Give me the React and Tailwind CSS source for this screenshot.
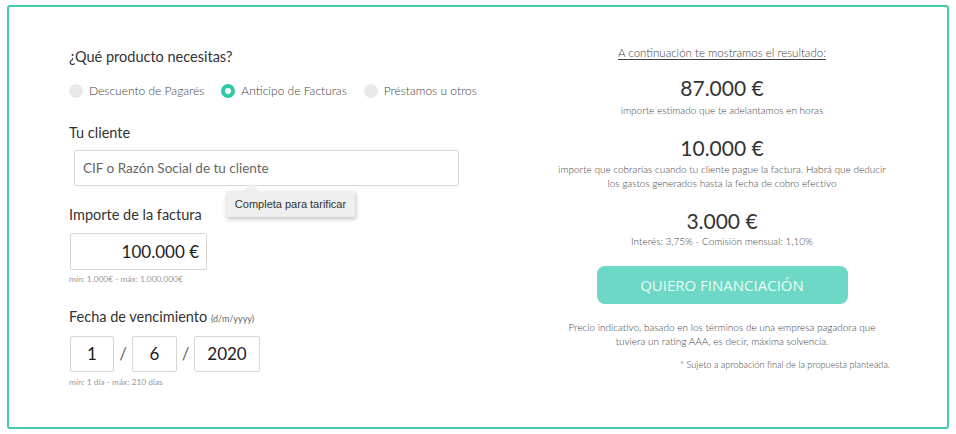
import { useState } from 'react';

const font = { fontFamily: 'Lato, "Open Sans", sans-serif' };

function Radio({ label, active, onClick }) {
  return (
    <button type="button" onClick={onClick} className="shrink-0 whitespace-nowrap flex items-center gap-[6px] mr-[17px]">
      {active ? (
        <span className="w-[14px] h-[14px] rounded-full border-[4px] border-[#2ec9a9] bg-white" />
      ) : (
        <span className="w-[14px] h-[14px] rounded-full bg-[#e9e9e9]" />
      )}
      <span className="text-[12px] text-[#444] font-light">{label}</span>
    </button>
  );
}

export default function App() {
  const [product, setProduct] = useState('facturas');

  return (
    <div className="w-[956px] h-[434px] bg-white pl-[7px] pt-[5px]" style={font}>
      <div className="w-[942px] h-[424px] border-2 border-[#43c9ae] rounded-[3px] flex">
        {/* formulario */}
        <div className="w-[500px] shrink-0 pl-[60px] pt-[40px] text-[#333]">
          <div className="text-[14.5px] leading-[20px]">¿Qué producto necesitas?</div>
          <div className="mt-[14px] h-[20px] flex items-center">
            <Radio label="Descuento de Pagarés" active={product === 'pagares'} onClick={() => setProduct('pagares')} />
            <Radio label="Anticipo de Facturas" active={product === 'facturas'} onClick={() => setProduct('facturas')} />
            <Radio label="Préstamos u otros" active={product === 'prestamos'} onClick={() => setProduct('prestamos')} />
          </div>

          <div className="mt-[22px] text-[14.5px] leading-[20px]">Tu cliente</div>
          <div className="relative mt-[7px] ml-[5px] w-[385px]">
            <input
              type="text"
              placeholder="CIF o Razón Social de tu cliente"
              className="w-full h-[36px] border border-[#d6d6d6] rounded-[2px] px-[8px] text-[13.5px] placeholder:text-[#666] outline-none"
            />
            <div className="absolute left-[152px] top-[41px] z-10">
              <div className="absolute left-[17px] -top-[8px] w-0 h-0 border-l-[8px] border-r-[8px] border-b-[8px] border-l-transparent border-r-transparent border-b-[#efefef]" />
              <div
                className="w-[129px] h-[26px] bg-[#efefef] shadow-[1px_2px_4px_rgba(0,0,0,0.25)] rounded-[2px] flex items-center justify-center text-[11px] text-[#333]"
                style={{ fontFamily: '"Liberation Sans", Arial, sans-serif' }}
              >
                Completa para tarificar
              </div>
            </div>
          </div>

          <div className="mt-[19px] text-[14.5px] leading-[20px]">Importe de la factura</div>
          <div className="mt-[8px] ml-[1px] w-[137px] h-[37px] border border-[#d6d6d6] rounded-[2px] flex items-center justify-end pr-[7px] text-[17px] text-[#222]">
            100.000 €
          </div>
          <div className="mt-[4px] text-[8.4px] leading-[10px] text-[#999]">mín: 1.000€ - máx: 1.000.000€</div>

          <div className="mt-[23px] text-[14.5px] leading-[20px]">
            Fecha de vencimiento <span className="text-[9px] text-[#666]">(d/m/yyyy)</span>
          </div>
          <div className="mt-[7px] ml-[1px] flex items-center text-[17px] text-[#222]">
            <div className="w-[44px] h-[36px] border border-[#d6d6d6] rounded-[2px] flex items-center justify-center">1</div>
            <span className="w-[18px] text-center text-[#666]">/</span>
            <div className="w-[45px] h-[36px] border border-[#d6d6d6] rounded-[2px] flex items-center justify-center">6</div>
            <span className="w-[17px] text-center text-[#666]">/</span>
            <div className="w-[66px] h-[36px] border border-[#d6d6d6] rounded-[2px] flex items-center justify-center">2020</div>
          </div>
          <div className="mt-[5px] text-[8.4px] leading-[10px] text-[#999]">mín: 1 día - máx: 210 días</div>
        </div>

        {/* resultado */}
        <div className="w-[380px] shrink-0 ml-[23px] pt-[39px] flex flex-col items-center text-center text-[#444] font-light">
          <div className="text-[11.5px] leading-[14px] underline underline-offset-2">A continuación te mostramos el resultado:</div>

          <div className="mt-[14px] text-[21px] leading-[28px] text-[#333] font-normal">87.000 €</div>
          <div className="mt-[2px] text-[10px] leading-[13px]">importe estimado que te adelantamos en horas</div>

          <div className="mt-[17px] text-[21px] leading-[28px] text-[#333] font-normal">10.000 €</div>
          <div className="text-[10px] leading-[14px] whitespace-nowrap">
            importe que cobrarías cuando tu cliente pague la factura. Habrá que deducir
            <br />
            los gastos generados hasta la fecha de cobro efectivo
          </div>

          <div className="mt-[17px] text-[21px] leading-[28px] text-[#333] font-normal">3.000 €</div>
          <div className="text-[10px] leading-[13px]">Interés: 3,75% - Comisión mensual: 1,10%</div>

          <button
            type="button"
            className="mt-[18px] w-[251px] h-[38px] rounded-[8px] bg-[#6dd8c5] text-[#e9fbf7] text-[15px] font-normal"
            style={{ fontFamily: '"Open Sans", Lato, sans-serif' }}
          >
            QUIERO FINANCIACIÓN
          </button>

          <div className="mt-[16px] text-[10px] leading-[14px] whitespace-nowrap">
            Precio indicativo, basado en los términos de una empresa pagadora que
            <br />
            tuviera un rating AAA, es decir, máxima solvencia.
          </div>
          <div className="mt-[10px] self-end pr-[22px] text-[9.2px] leading-[14px] whitespace-nowrap">
            * Sujeto a aprobación final de la propuesta planteada.
          </div>
        </div>
      </div>
    </div>
  );
}
